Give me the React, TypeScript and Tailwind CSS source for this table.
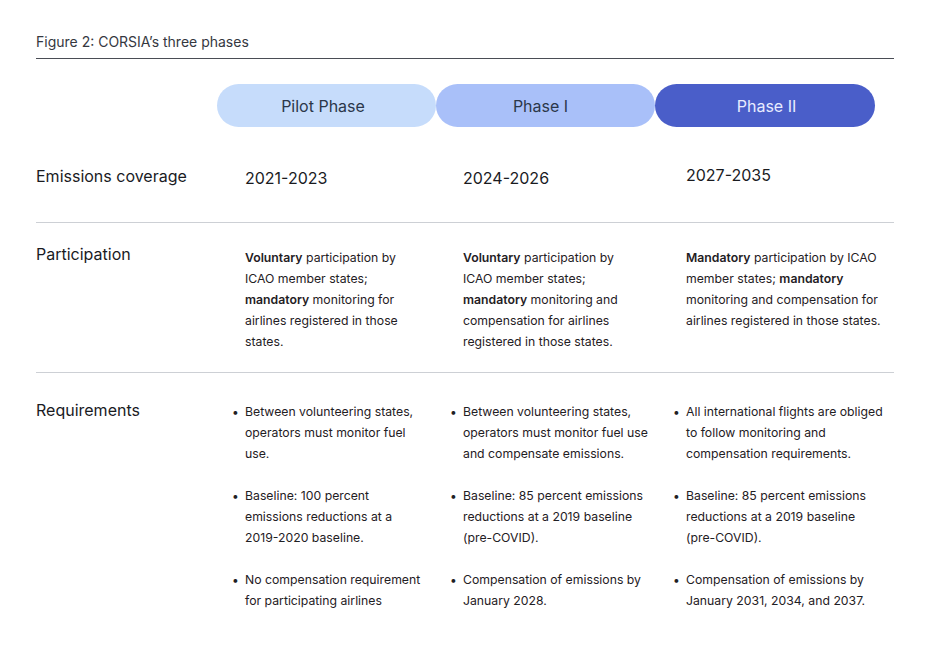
import React from "react";

type Line = React.ReactNode;

const phases = [
  { name: "Pilot Phase", cls: "bg-[#c6dcfb] text-[#2b374a] pr-[7px]" },
  { name: "Phase I", cls: "bg-[#a9c0f9] text-[#2b374a] pr-[10px]" },
  { name: "Phase II", cls: "bg-[#4a5ec9] text-[#e8ecff] pl-[3px]" },
];

// per-column left padding (text start minus pill start)
const colPad = ["pl-[28px]", "pl-[27px]", "pl-[31px]"];
const bulletPad = ["pl-[15px]", "pl-[14px]", "pl-[18px]"];

const participation: Line[][] = [
  [
    <><b className="font-semibold">Voluntary</b> participation by</>,
    "ICAO member states;",
    <><b className="font-semibold">mandatory</b> monitoring for</>,
    "airlines registered in those",
    "states.",
  ],
  [
    <><b className="font-semibold">Voluntary</b> participation by</>,
    "ICAO member states;",
    <><b className="font-semibold">mandatory</b> monitoring and</>,
    "compensation for airlines",
    "registered in those states.",
  ],
  [
    <><b className="font-semibold">Mandatory</b> participation by ICAO</>,
    <>member states; <b className="font-semibold">mandatory</b></>,
    "monitoring and compensation for",
    "airlines registered in those states.",
  ],
];

const requirements: string[][][] = [
  [
    ["Between volunteering states,", "operators must monitor fuel", "use."],
    ["Baseline: 100 percent", "emissions reductions at a", "2019-2020 baseline."],
    ["No compensation requirement", "for participating airlines"],
  ],
  [
    ["Between volunteering states,", "operators must monitor fuel use", "and compensate emissions."],
    ["Baseline: 85 percent emissions", "reductions at a 2019 baseline", "(pre-COVID)."],
    ["Compensation of emissions by", "January 2028."],
  ],
  [
    ["All international flights are obliged", "to follow monitoring and", "compensation requirements."],
    ["Baseline: 85 percent emissions", "reductions at a 2019 baseline", "(pre-COVID)."],
    ["Compensation of emissions by", "January 2031, 2034, and 2037."],
  ],
];

function Lines({ lines }: { lines: Line[] }) {
  return (
    <>
      {lines.map((l, i) => (
        <span key={i} className="block whitespace-nowrap">
          {l}
        </span>
      ))}
    </>
  );
}

export default function App() {
  return (
    <div
      className="w-[930px] h-[668px] bg-white px-[36px] pt-[32px] text-[#1a1b1f] overflow-hidden"
      style={{ fontFamily: "Inter, 'Noto Sans', sans-serif" }}
    >
      <div className="border-b border-[#4a4d55] pb-[6px] text-[14px] leading-[20px] text-[#35383f]">
        Figure 2: CORSIA’s three phases
      </div>

      <div className="grid grid-cols-[181px_219px_219px_220px] mt-[25px]">
        <div />
        {phases.map((p) => (
          <div
            key={p.name}
            className={
              "h-[43px] rounded-full flex items-center justify-center text-[16px] " +
              p.cls
            }
          >
            {p.name}
          </div>
        ))}
      </div>

      {/* Emissions coverage */}
      <div className="grid grid-cols-[181px_219px_219px_238px] pt-[37px] pb-[32px] border-b border-[#cdd0d5] text-[16px] leading-[24px]">
        <div>Emissions coverage</div>
        <div className={colPad[0] + " mt-[2px]"}>2021-2023</div>
        <div className={colPad[1] + " mt-[2px]"}>2024-2026</div>
        <div className={colPad[2] + " -mt-px"}>2027-2035</div>
      </div>

      {/* Participation */}
      <div className="grid grid-cols-[181px_219px_219px_238px] pt-[19px] pb-[20px] border-b border-[#cdd0d5]">
        <div className="text-[16px] leading-[24px]">Participation</div>
        {participation.map((lines, i) => (
          <div
            key={i}
            className={colPad[i] + " pt-[5px] text-[12.25px] leading-[21px] text-[#1f2024]"}
          >
            <Lines lines={lines} />
          </div>
        ))}
      </div>

      {/* Requirements */}
      <div className="grid grid-cols-[181px_219px_219px_238px] pt-[25px]">
        <div className="text-[16px] leading-[24px]">Requirements</div>
        {requirements.map((groups, i) => (
          <ul
            key={i}
            className={bulletPad[i] + " pt-[3px] flex flex-col gap-[21px] text-[12.25px] leading-[21px] text-[#1f2024]"}
          >
            {groups.map((g, j) => (
              <li key={j} className="flex">
                <span className="w-[13px] shrink-0 text-[12px]">•</span>
                <span>
                  <Lines lines={g} />
                </span>
              </li>
            ))}
          </ul>
        ))}
      </div>
    </div>
  );
}
